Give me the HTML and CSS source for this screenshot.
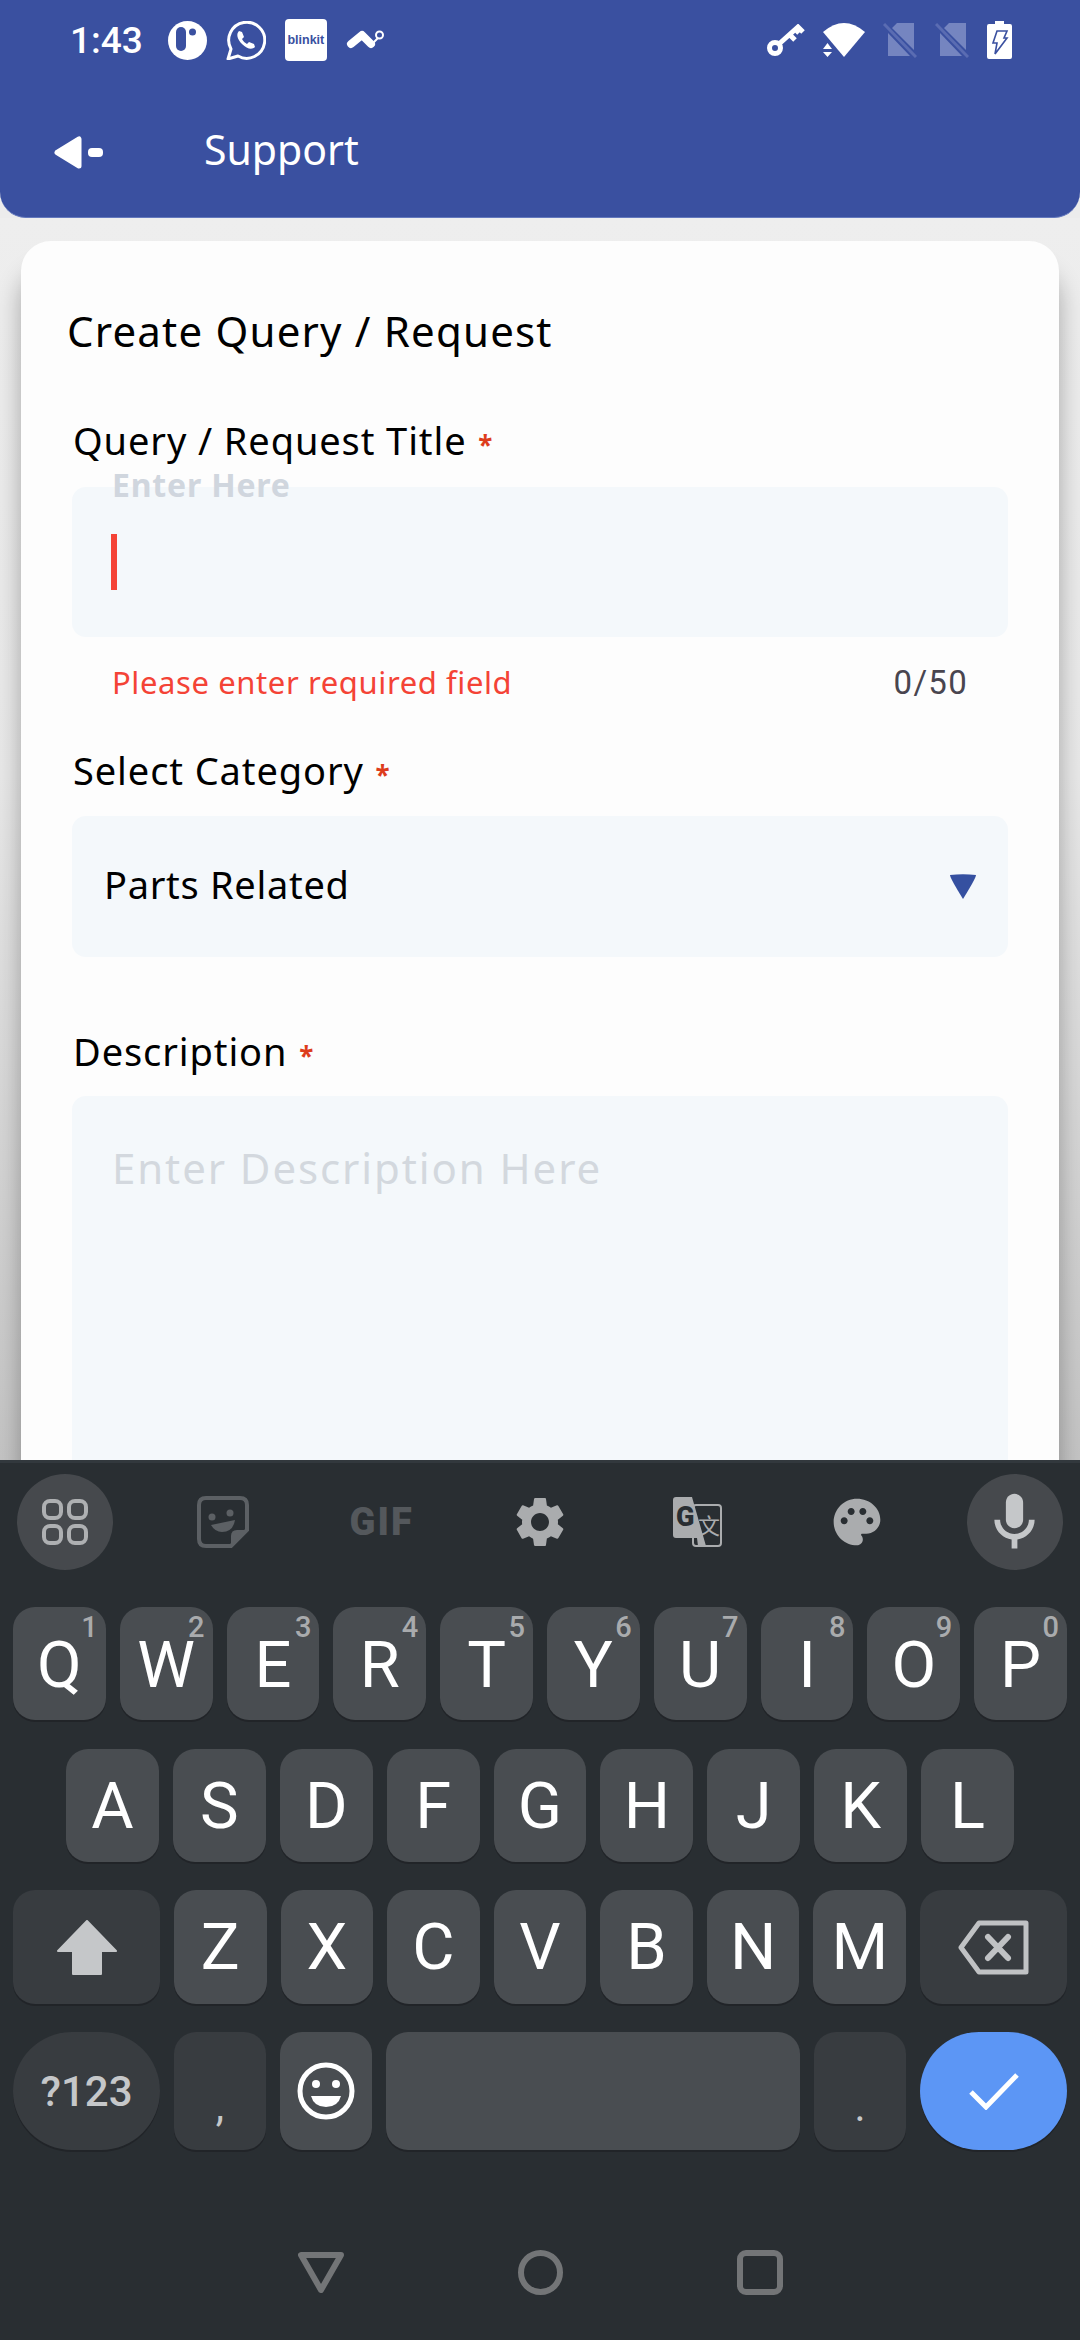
FILE: index.html
```html
<!DOCTYPE html>
<html lang="en">
<head>
  <meta charset="UTF-8">
  <meta name="viewport" content="width=device-width, initial-scale=1.0">
  <title>Support</title>
  <link rel="stylesheet" href="styles.css">
</head>
<body>
  <header class="header">
    <div class="status">
      <div class="status-left">
        <span class="time">1:43</span>
        <svg width="39" height="39" viewBox="0 0 39 39"><circle cx="19.5" cy="19.5" r="19.5" fill="#fff"/><rect x="8" y="6" width="10" height="24" rx="5" fill="#3a50a0"/><circle cx="24.5" cy="11" r="3.500" fill="#3a50a0"/></svg>
        <svg width="40" height="39" viewBox="0 0 40 39"><path d="M2 38l3-10A18 18 0 1 1 12 35Z" fill="none" stroke="#fff" stroke-width="3" stroke-linejoin="round"/><path d="M13 10c-3 3-2 8 3 13s10 6 13 3l-1-3-5-2-2 2c-2-1-4-3-5-5l2-2-2-5Z" fill="#fff"/></svg>
        <span class="blinkit">blinkit</span>
        <svg width="39" height="20" viewBox="0 0 39 20"><path d="M5 14L16 5L25 14" fill="none" stroke="#fff" stroke-width="8" stroke-linecap="round" stroke-linejoin="round"/><path d="M27 13L32 8" stroke="#fff" stroke-width="2"/><circle cx="33.5" cy="5" r="3.500" fill="none" stroke="#fff" stroke-width="2"/></svg>
      </div>
      <div class="status-right">
        <svg width="38" height="32" viewBox="0 0 38 32"><circle cx="8" cy="24" r="5.500" fill="none" stroke="#fff" stroke-width="5"/><path d="M12 20L31 3L36 8M23 11L28 16M29 6L32 9" fill="none" stroke="#fff" stroke-width="5"/></svg>
        <svg width="42" height="34" viewBox="0 0 42 34"><path d="M0 9Q21 -9 42 9L21 34Z" fill="#fff"/><path d="M4.500 20L9 26H0ZM0 29H9L4.500 34Z" fill="#fff"/></svg>
        <svg width="34" height="35" viewBox="0 0 34 35"><path d="M14 0H31V27L9 5ZM5 10L27 33H5Z" fill="#7585c0"/><path d="M1 1L33 34" stroke="#5a6cb2" stroke-width="3"/></svg>
        <svg width="34" height="35" viewBox="0 0 34 35"><path d="M14 0H31V27L9 5ZM5 10L27 33H5Z" fill="#7585c0"/><path d="M1 1L33 34" stroke="#5a6cb2" stroke-width="3"/></svg>
        <svg width="25" height="38" viewBox="0 0 25 38"><path d="M8 0H17V3H23Q25 3 25 5V36Q25 38 23 38H2Q0 38 0 36V5Q0 3 2 3H8Z" fill="#fff"/><path d="M10 10H20L17 17H20L8 33L10 22H6Z" fill="#fff" stroke="#3a50a0" stroke-width="1.600"/></svg>
      </div>
    </div>
    <div class="toolbar">
      <svg width="49" height="33" viewBox="0 0 49 33"><path d="M3 16.500L25 3V30Z" fill="#fff" stroke="#fff" stroke-width="5" stroke-linejoin="round"/><rect x="34" y="12" width="15" height="9" rx="4" fill="#fff"/></svg>
      <span class="page-title">Support</span>
    </div>
  </header>

  <main class="content">
    <section class="card">
      <h1 class="card-title">Create Query / Request</h1>

      <div class="label first">Query / Request Title <span class="req">*</span></div>
      <div class="field title-field">
        <span class="float-hint">Enter Here</span>
        <span class="caret"></span>
      </div>
      <div class="helper">
        <span class="error">Please enter required field</span>
        <span class="count">0/50</span>
      </div>

      <div class="label second">Select Category <span class="req">*</span></div>
      <div class="field select-field">
        <span class="select-value">Parts Related</span>
        <svg width="28" height="25" viewBox="0 0 28 25"><path d="M1 1Q14 -0.500 27 1Q27 4 14 25Q1 4 1 1Z" fill="#3550a0"/></svg>
      </div>

      <div class="label third">Description <span class="req">*</span></div>
      <div class="field area-field">Enter Description Here</div>
    </section>
  </main>

  <div class="keyboard">
    <div class="kb-tools">
      <div class="tool round">
        <svg width="46" height="46" viewBox="0 0 46 46" fill="none" stroke="#aeb0b2" stroke-width="4"><rect x="2" y="2" width="17" height="17" rx="6"/><rect x="27" y="2" width="17" height="17" rx="6"/><rect x="2" y="27" width="17" height="17" rx="6"/><rect x="27" y="27" width="17" height="17" rx="6"/></svg>
      </div>
      <div class="tool">
        <svg width="52" height="52" viewBox="0 0 52 52"><path d="M34 50H9Q2 50 2 43V9Q2 2 9 2H43Q50 2 50 9V34Z" fill="none" stroke="#5c6064" stroke-width="4"/><path d="M34 50V40Q34 34 40 34H50Z" fill="#5c6064"/><circle cx="15" cy="21" r="3.500" fill="#5c6064"/><circle cx="33" cy="17" r="3.500" fill="#5c6064"/><path d="M14 29L38 24Q36 36 25 36Q18 36 14 29Z" fill="#5c6064"/></svg>
      </div>
      <div class="tool"><span class="gif">GIF</span></div>
      <div class="tool">
        <svg width="60" height="60" viewBox="0 0 24 24"><path fill="#aaacae" d="M19.14 12.94c.04-.3.06-.61.06-.94 0-.32-.02-.64-.07-.94l2.03-1.58c.18-.14.23-.41.12-.61l-1.92-3.32c-.12-.22-.37-.29-.59-.22l-2.39.96c-.5-.38-1.03-.7-1.62-.94l-.36-2.54c-.04-.24-.24-.41-.48-.41h-3.84c-.24 0-.43.17-.47.41l-.36 2.54c-.59.24-1.13.57-1.62.94l-2.39-.96c-.22-.08-.47 0-.59.22L2.74 8.87c-.12.21-.08.47.12.61l2.03 1.58c-.05.3-.09.63-.09.94s.02.64.07.94l-2.03 1.58c-.18.14-.23.41-.12.61l1.92 3.32c.12.22.37.29.59.22l2.39-.96c.5.38 1.03.7 1.62.94l.36 2.54c.05.24.24.41.48.41h3.84c.24 0 .44-.17.47-.41l.36-2.54c.59-.24 1.13-.56 1.62-.94l2.39.96c.22.08.47 0 .59-.22l1.92-3.32c.12-.22.07-.47-.12-.61l-2.01-1.58zM12 15.6c-1.98 0-3.6-1.62-3.6-3.6s1.62-3.6 3.6-3.6 3.6 1.62 3.6 3.6-1.62 3.6-3.6 3.6z"/></svg>
      </div>
      <div class="tool">
        <svg width="50" height="50" viewBox="0 0 50 50"><rect x="20" y="8" width="28" height="41" rx="3" fill="none" stroke="#aaacae" stroke-width="2"/><path d="M3 0H19L33 49H25L24 41H3Q0 41 0 38V3Q0 0 3 0Z" fill="#aaacae"/><text x="3" y="29" class="tr-g">G</text><text x="25" y="37" class="tr-wen">文</text></svg>
      </div>
      <div class="tool">
        <svg width="56" height="56" viewBox="0 0 24 24"><path fill="#aaacae" d="M12 2C6.49 2 2 6.49 2 12s4.49 10 10 10c1.38 0 2.5-1.12 2.5-2.5 0-.61-.23-1.2-.64-1.67-.08-.1-.13-.21-.13-.33 0-.28.22-.5.5-.5H16c3.31 0 6-2.69 6-6 0-4.96-4.49-9-10-9zm-5.5 11c-.83 0-1.5-.67-1.5-1.500S5.670 10 6.500 10s1.500.67 1.500 1.500S7.330 13 6.500 13zm3-4C8.670 9 8 8.330 8 7.500S8.670 6 9.500 6s1.500.67 1.500 1.500S10.330 9 9.500 9zm5 0c-.83 0-1.500-.67-1.500-1.500S13.670 6 14.500 6s1.500.67 1.500 1.500S15.330 9 14.500 9zm3 4c-.83 0-1.500-.67-1.500-1.500s.67-1.500 1.500-1.500 1.500.67 1.500 1.500-.67 1.500-1.500 1.500z"/></svg>
      </div>
      <div class="tool round">
        <svg width="69" height="69" viewBox="0 0 24 24"><path fill="#c5c7c9" d="M12 14c1.66 0 3-1.34 3-3V5c0-1.66-1.34-3-3-3S9 3.340 9 5v6c0 1.66 1.34 3 3 3z"/><path fill="#c5c7c9" d="M17 11c0 2.76-2.24 5-5 5s-5-2.240-5-5H5c0 3.530 2.610 6.430 6 6.920V21h2v-3.080c3.390-.49 6-3.390 6-6.920h-2z"/></svg>
      </div>
    </div>

    <div class="row top-row">
      <div class="key">Q<span class="hint">1</span></div>
      <div class="key">W<span class="hint">2</span></div>
      <div class="key">E<span class="hint">3</span></div>
      <div class="key">R<span class="hint">4</span></div>
      <div class="key">T<span class="hint">5</span></div>
      <div class="key">Y<span class="hint">6</span></div>
      <div class="key">U<span class="hint">7</span></div>
      <div class="key">I<span class="hint">8</span></div>
      <div class="key">O<span class="hint">9</span></div>
      <div class="key">P<span class="hint">0</span></div>
    </div>
    <div class="row mid-row">
      <div class="key">A</div>
      <div class="key">S</div>
      <div class="key">D</div>
      <div class="key">F</div>
      <div class="key">G</div>
      <div class="key">H</div>
      <div class="key">J</div>
      <div class="key">K</div>
      <div class="key">L</div>
    </div>
    <div class="row low-row">
      <div class="key wide dark">
        <svg width="60" height="55" viewBox="0 0 60 55"><path d="M30 1L59 31H44V54H16V31H1Z" fill="#c5c7c9" stroke="#c5c7c9" stroke-width="2" stroke-linejoin="round"/></svg>
      </div>
      <div class="key">Z</div>
      <div class="key">X</div>
      <div class="key">C</div>
      <div class="key">V</div>
      <div class="key">B</div>
      <div class="key">N</div>
      <div class="key">M</div>
      <div class="key wide dark">
        <svg width="71" height="55" viewBox="0 0 71 55" fill="none" stroke="#c0c2c4"><path d="M68 3H21L3 27.500L21 52H68Z" stroke-width="5" stroke-linejoin="round"/><path d="M30 17L50 38M50 17L30 38" stroke-width="6" stroke-linecap="round"/></svg>
      </div>
    </div>
    <div class="row bottom-row">
      <div class="key wide dark pill sym">?123</div>
      <div class="key dark punct">,</div>
      <div class="key">
        <svg width="58" height="58" viewBox="0 0 58 58"><circle cx="29" cy="29" r="26" fill="none" stroke="#fff" stroke-width="5"/><circle cx="19" cy="22" r="4" fill="#fff"/><circle cx="39" cy="22" r="4" fill="#fff"/><path d="M14 34H44Q41 45 29 45Q17 45 14 34Z" fill="#fff"/></svg>
      </div>
      <div class="key space"></div>
      <div class="key dark punct">.</div>
      <div class="key wide pill enter">
        <svg width="50" height="38" viewBox="0 0 50 38"><path d="M2 20L17 35L48 3" fill="none" stroke="#fff" stroke-width="5"/></svg>
      </div>
    </div>

    <div class="navbar">
      <svg width="46" height="41" viewBox="0 0 46 41"><path d="M3 3H43L23 38Z" fill="none" stroke="#737577" stroke-width="6" stroke-linejoin="round"/></svg>
      <span class="nav-home"></span>
      <span class="nav-recent"></span>
    </div>
  </div>
</body>
</html>
```

FILE: styles.css
```css
* { box-sizing: border-box; }
html, body { margin: 0; padding: 0; }
body {
  width: 1080px;
  height: 2340px;
  overflow: hidden;
  display: flex;
  flex-direction: column;
  font-family: "Noto Sans", Lato, sans-serif;
  background-color: #ececec;
}
svg { display: block; flex: none; }

/* app bar */
.header {
  height: 218px;
  background-color: #3a50a0;
  border-bottom: 1px solid #6378bd;
  border-radius: 0 0 26px 26px;
  color: #fff;
  flex: none;
  padding-top: 19px;
  position: relative;
  z-index: 1;
}
.status {
  height: 42px;
  display: flex;
  justify-content: space-between;
  align-items: center;
  padding: 0 68px 0 70px;
}
.status-left, .status-right { display: flex; align-items: center; gap: 19px; }
.status-right { gap: 18px; }
.time {
  font-family: Roboto, sans-serif;
  font-size: 37px;
  font-weight: 500;
  margin-right: 6px;
}
.blinkit {
  width: 42px;
  height: 42px;
  background-color: #fff;
  border-radius: 4px;
  color: #3a50a0;
  font-family: "Liberation Sans", sans-serif;
  font-size: 12.500px;
  font-weight: 700;
  display: flex;
  align-items: center;
  justify-content: center;
}
.toolbar {
  display: flex;
  align-items: center;
  gap: 101px;
  margin-top: 63px;
  padding-left: 54px;
}
.page-title { font-size: 41px; line-height: 50px; margin-bottom: 6px; }

/* form card */
.content {
  flex: 1;
  min-height: 0;
  overflow: hidden;
  padding: 23px 21px 0;
  background: linear-gradient(#eeeeee 0%, #e8e8e8 45%, #c4c4c4 100%);
}
.card {
  height: 1400px;
  padding: 65px 51px 0;
  background-color: #fdfdfd;
  border-radius: 30px;
  box-shadow: 0 30px 24px rgba(0, 0, 0, 0.3);
}
.card-title {
  margin: 0 0 0 -5px;
  font-size: 42px;
  line-height: 50px;
  font-weight: 400;
  letter-spacing: 1.2px;
  color: #000;
}
.label { font-size: 38px; line-height: 48px; letter-spacing: 0.9px; color: #000; margin-left: 1px; }
.label.first { margin-top: 60px; }
.label.second { margin-top: 44px; }
.label.third { margin-top: 70px; }
.req { color: #dd3c1c; font-size: 26px; line-height: 0; font-weight: 700; margin-left: 1px; }
.field {
  background-color: #f4f8fb;
  border-radius: 14px;
  display: flex;
  align-items: center;
}
.title-field {
  position: relative;
  height: 150px;
  margin-top: 23px;
  padding-left: 39px;
}
.float-hint {
  position: absolute;
  left: 40px;
  top: -24px;
  font-size: 32px;
  line-height: 44px;
  font-weight: 700;
  letter-spacing: 0.8px;
  color: #d0d6de;
}
.caret { width: 6px; height: 56px; background-color: #f44336; }
.helper {
  display: flex;
  justify-content: space-between;
  align-items: center;
  height: 40px;
  margin-top: 25px;
  padding: 0 40px;
}
.error { font-size: 31px; color: #f44336; letter-spacing: 0.6px; }
.count {
  font-family: Roboto, sans-serif;
  font-size: 33px;
  color: #49454f;
  letter-spacing: 1.3px;
}
.select-field {
  height: 141px;
  margin-top: 22px;
  padding: 0 31px 0 32px;
  justify-content: space-between;
}
.select-value { font-size: 38px; letter-spacing: 0.7px; color: #000; margin-bottom: 5px; }
.area-field {
  height: 600px;
  margin-top: 21px;
  padding: 44px 40px 0;
  align-items: flex-start;
  font-size: 42px;
  line-height: 56px;
  letter-spacing: 1.9px;
  color: #d3d8de;
}

/* keyboard */
.keyboard {
  flex: none;
  height: 880px;
  padding-top: 11px;
  background-color: #292e32;
  border-top: 3px solid #32383d;
  position: relative;
  z-index: 2;
  font-family: Roboto, sans-serif;
}
.kb-tools {
  display: flex;
  justify-content: space-between;
  padding: 0 17px;
  margin-bottom: 37px;
}
.tool {
  width: 96px;
  height: 96px;
  display: flex;
  align-items: center;
  justify-content: center;
}
.tool.round { background-color: #46494d; border-radius: 50%; }
.gif {
  font-size: 38px;
  font-weight: 900;
  color: #54585c;
  letter-spacing: 2px;
}
.tr-g { font-family: Roboto, sans-serif; font-size: 27px; font-weight: 900; fill: #292e32; }
.tr-wen { font-family: "Noto Sans CJK SC", sans-serif; font-size: 22px; fill: #aaacae; }
.row { display: flex; gap: 14px; padding: 0 13px; margin-bottom: 29px; }
.top-row .key, .mid-row .key { height: 113px; }
.top-row .key { padding-top: 3px; }
.mid-row { padding: 0 66px; margin-bottom: 28px; }
.low-row { margin-bottom: 28px; }
.low-row .key { height: 114px; }
.bottom-row .key { height: 118px; }
.key {
  position: relative;
  flex: 1;
  display: flex;
  align-items: center;
  justify-content: center;
  background-color: #494d51;
  border-radius: 22px;
  box-shadow: 0 2px 0 #212428;
  color: #fff;
  font-size: 65px;
}
.key.wide { flex: 0 0 147px; }
.key.dark { background-color: #383c40; color: #c5c7c9; }
.key.space { flex: 0 0 414px; }
.key.pill { border-radius: 59px; }
.key.sym { font-size: 42px; font-weight: 500; }
.key.punct { font-size: 42px; padding-top: 30px; }
.key.enter { background-color: #5c96f5; }
.hint {
  position: absolute;
  top: 6px;
  right: 8px;
  font-size: 29px;
  line-height: 28px;
  font-weight: 500;
  color: #a9abad;
}
.navbar {
  display: flex;
  justify-content: center;
  align-items: center;
  gap: 174px;
  margin-top: 100px;
  height: 45px;
}
.nav-home { width: 45px; height: 45px; border: 6px solid #737577; border-radius: 50%; }
.nav-recent { width: 46px; height: 45px; border: 6px solid #737577; border-radius: 9px; }
```
